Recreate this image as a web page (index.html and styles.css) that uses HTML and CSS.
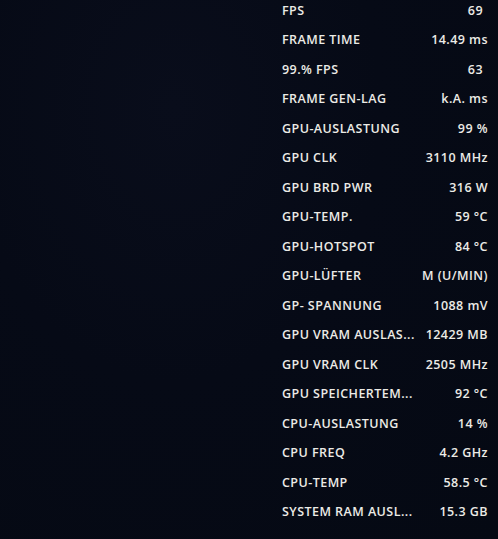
FILE: index.html
```html
<!DOCTYPE html>
<html lang="de">
<head>
<meta charset="utf-8">
<title>Overlay</title>
<link rel="stylesheet" href="styles.css">
</head>
<body>
<main class="screen">
  <section class="overlay">
    <div class="row"><span class="label">FPS</span><span class="value bare">69</span></div>
    <div class="row"><span class="label">FRAME TIME</span><span class="value">14.49 ms</span></div>
    <div class="row"><span class="label">99.% FPS</span><span class="value bare">63</span></div>
    <div class="row"><span class="label">FRAME GEN-LAG</span><span class="value">k.A. ms</span></div>
    <div class="row"><span class="label">GPU-AUSLASTUNG</span><span class="value">99 %</span></div>
    <div class="row"><span class="label">GPU CLK</span><span class="value">3110 MHz</span></div>
    <div class="row"><span class="label">GPU BRD PWR</span><span class="value">316 W</span></div>
    <div class="row"><span class="label">GPU-TEMP.</span><span class="value">59 °C</span></div>
    <div class="row"><span class="label">GPU-HOTSPOT</span><span class="value">84 °C</span></div>
    <div class="row"><span class="label">GPU-LÜFTER</span><span class="value">M (U/MIN)</span></div>
    <div class="row"><span class="label">GP- SPANNUNG</span><span class="value">1088 mV</span></div>
    <div class="row"><span class="label">GPU VRAM AUSLAS...</span><span class="value">12429 MB</span></div>
    <div class="row"><span class="label">GPU VRAM CLK</span><span class="value">2505 MHz</span></div>
    <div class="row"><span class="label">GPU SPEICHERTEM...</span><span class="value">92 °C</span></div>
    <div class="row"><span class="label">CPU-AUSLASTUNG</span><span class="value">14 %</span></div>
    <div class="row"><span class="label">CPU FREQ</span><span class="value">4.2 GHz</span></div>
    <div class="row"><span class="label">CPU-TEMP</span><span class="value">58.5 °C</span></div>
    <div class="row"><span class="label">SYSTEM RAM AUSL...</span><span class="value">15.3 GB</span></div>
  </section>
</main>
</body>
</html>
```
FILE: styles.css
```css
html, body {
  margin: 0;
  padding: 0;
  background: #050914;
}
.screen {
  width: 498px;
  height: 539px;
  display: flex;
  justify-content: flex-end;
  background: radial-gradient(ellipse at 35% 20%, #090d1b 0%, #060a16 45%, #050913 100%);
  overflow: hidden;
}
.overlay {
  width: 206px;
  padding: 3px 10px 0 0;
  display: flex;
  flex-direction: column;
  gap: 13.47px;
  font-family: "Open Sans", "Noto Sans", sans-serif;
  font-weight: 600;
  font-size: 12.5px;
  line-height: 16px;
  color: #ecebe6;
  letter-spacing: 0.45px;
}
.row {
  display: flex;
  justify-content: space-between;
  white-space: nowrap;
}
.value.bare {
  padding-right: 5px;
}
```
